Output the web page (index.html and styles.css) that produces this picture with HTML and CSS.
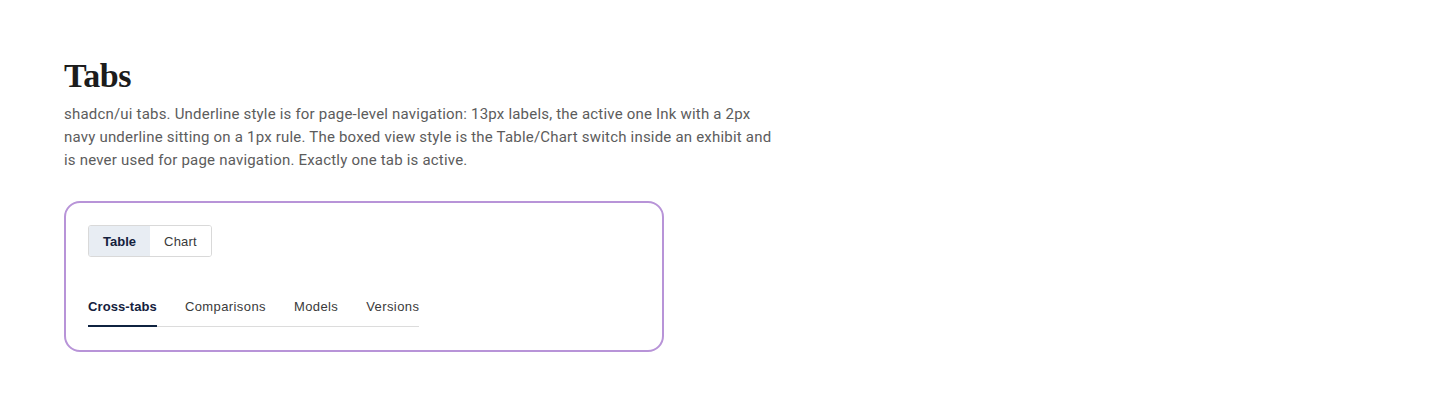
FILE: index.html
```html
<!DOCTYPE html>
<html lang="en">
<head>
<meta charset="utf-8">
<title>Tabs</title>
<link rel="stylesheet" href="styles.css">
</head>
<body>
<main class="page">
  <h1 class="title">Tabs</h1>
  <p class="lede">shadcn/ui tabs. Underline style is for page-level navigation: 13px labels, the active one Ink with a 2px navy underline sitting on a 1px rule. The boxed view style is the Table/Chart switch inside an exhibit and is never used for page navigation. Exactly one tab is active.</p>
  <section class="card">
    <div class="seg">
      <button class="seg-btn seg-btn--active">Table</button>
      <button class="seg-btn">Chart</button>
    </div>
    <nav class="tabs">
      <a class="tab tab--active">Cross-tabs</a>
      <a class="tab">Comparisons</a>
      <a class="tab">Models</a>
      <a class="tab">Versions</a>
    </nav>
  </section>
</main>
</body>
</html>
```
FILE: styles.css
```css
* { box-sizing: border-box; }
html, body { margin: 0; padding: 0; background: #fff; }
.page {
  padding: 56px 64px 0;
  font-family: "Roboto", "Liberation Sans", sans-serif;
}
.title {
  margin: 0;
  font-family: "Liberation Serif", "DejaVu Serif", serif;
  font-weight: 700;
  font-size: 34px;
  line-height: 40px;
  color: #1c1c1c;
  letter-spacing: -0.4px;
}
.lede {
  margin: 7px 0 0;
  max-width: 718px;
  font-size: 15px;
  line-height: 23px;
  letter-spacing: 0.2px;
  color: #5c5c5c;
}
.card {
  margin-top: 29px;
  width: 600px;
  border: 2px solid #b894d8;
  border-radius: 16px;
  padding: 22px 22px 23px;
  display: flex;
  flex-direction: column;
  align-items: flex-start;
}
.seg {
  display: flex;
  border: 1px solid #d9d9d9;
  border-radius: 3px;
  overflow: hidden;
}
.seg-btn {
  width: 61px;
  height: 30px;
  border: 0;
  background: #fff;
  font-family: "Liberation Sans", Arial, sans-serif;
  font-size: 13px;
  color: #3a3a3a;
  padding: 0;
  letter-spacing: 0.2px;
}
.seg-btn--active {
  background: #e8edf3;
  font-weight: 700;
  color: #14213d;
  letter-spacing: 0;
}
.tabs {
  margin-top: 42px;
  display: flex;
  gap: 28px;
  border-bottom: 1px solid #dcdcdc;
}
.tab {
  font-family: "Liberation Sans", Arial, sans-serif;
  font-size: 13px;
  line-height: 16px;
  color: #3a3a3a;
  letter-spacing: 0.4px;
  padding-bottom: 10px;
  margin-bottom: -1px;
  border-bottom: 2px solid transparent;
}
.tab--active {
  font-weight: 700;
  color: #14213d;
  letter-spacing: 0.1px;
  border-bottom-color: #0f2340;
}
```
